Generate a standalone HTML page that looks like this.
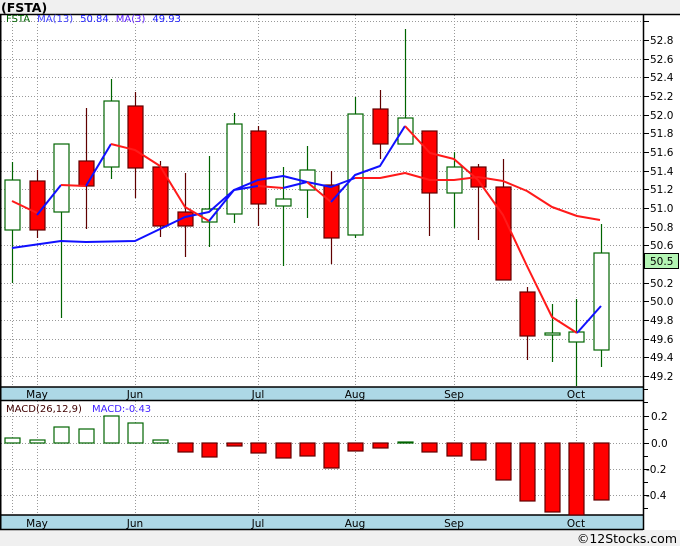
<!DOCTYPE html>
<html><head><meta charset="utf-8"><style>
html,body{margin:0;padding:0;background:#fff}
svg{display:block;font-family:"DejaVu Sans","Liberation Sans",sans-serif}
</style></head><body>
<svg width="680" height="546" viewBox="0 0 680 546" xmlns="http://www.w3.org/2000/svg">
<rect x="0" y="0" width="680" height="546" fill="#fff"/>
<rect x="0" y="0" width="680" height="14" fill="#f0f0f0"/>
<rect x="0" y="530" width="680" height="16" fill="#f0f0f0"/>
<text x="1" y="12" font-size="12.5" font-weight="bold" fill="#000">(FSTA)</text>
<text x="677" y="543" font-size="12.5" text-anchor="end" fill="#000">©12Stocks.com</text>

<g stroke="#999" stroke-width="1" stroke-dasharray="1,2" fill="none">
<path d="M1 21.5H643M1 40.5H643M1 59.5H643M1 77.5H643M1 96.5H643M1 115.5H643M1 133.5H643M1 152.5H643M1 171.5H643M1 189.5H643M1 208.5H643M1 227.5H643M1 245.5H643M1 264.5H643M1 283.5H643M1 301.5H643M1 320.5H643M1 339.5H643M1 357.5H643M1 376.5H643"/>
<path d="M1 416.5H643M1 443.5H643M1 469.5H643M1 495.5H643"/>
<path d="M12.5 15V387M37.5 15V387M135.5 15V387M258.5 15V387M355.5 15V387M454.5 15V387M576.5 15V387"/>
<path d="M12.5 401V515M37.5 401V515M135.5 401V515M258.5 401V515M355.5 401V515M454.5 401V515M576.5 401V515"/>
</g>

<rect x="1" y="387" width="642" height="13" fill="#add8e6"/>
<rect x="1" y="515" width="642" height="14" fill="#add8e6"/>
<g font-size="10.5" fill="#000" text-anchor="middle">
<text x="37" y="398">May</text><text x="135" y="398">Jun</text><text x="258" y="398">Jul</text><text x="355" y="398">Aug</text><text x="454" y="398">Sep</text><text x="576" y="398">Oct</text>
<text x="37" y="527">May</text><text x="135" y="527">Jun</text><text x="258" y="527">Jul</text><text x="355" y="527">Aug</text><text x="454" y="527">Sep</text><text x="576" y="527">Oct</text>
</g>
<g stroke="#000" stroke-width="1.5" fill="none">
<path d="M0.75 14V530"/>
<path d="M643.5 14V530"/>
<path d="M0 14.5H680"/>
<path d="M0 387H643M0 400.5H643M0 515H643M0 529.5H643"/>
</g>

<text x="6" y="22" font-size="10"><tspan fill="#006400">FSTA</tspan><tspan fill="#4040ff" dx="7">MA(13)</tspan><tspan fill="#2020ff" dx="7">50.84</tspan><tspan fill="#6020ff" dx="7">MA(3)</tspan><tspan fill="#2020ff" dx="7">49.93</tspan></text>
<text x="6" y="412" font-size="10"><tspan fill="#400000">MACD(26,12,9)</tspan><tspan fill="#4020ff" dx="10">MACD:-0.43</tspan></text>

<g stroke="#000" stroke-width="1">
<path d="M643 40.5h6M643 59.5h6M643 77.5h6M643 96.5h6M643 115.5h6M643 133.5h6M643 152.5h6M643 171.5h6M643 189.5h6M643 208.5h6M643 227.5h6M643 245.5h6M643 283.5h6M643 301.5h6M643 320.5h6M643 339.5h6M643 357.5h6M643 376.5h6M643 21.5h6"/>
<path d="M643 402.5h5M643 416.5h6M643 429.5h5M643 443.5h6M643 456.5h5M643 469.5h6M643 482.5h5M643 495.5h6M643 508.5h5M643 389.5h5"/>
</g>
<g font-size="10.5" fill="#000">
<text x="650" y="44">52.8</text><text x="650" y="63">52.6</text><text x="650" y="81">52.4</text><text x="650" y="100">52.2</text><text x="650" y="119">52.0</text><text x="650" y="137">51.8</text><text x="650" y="156">51.6</text><text x="650" y="175">51.4</text><text x="650" y="193">51.2</text><text x="650" y="212">51.0</text><text x="650" y="231">50.8</text><text x="650" y="249">50.6</text><text x="650" y="287">50.2</text><text x="650" y="305">50.0</text><text x="650" y="324">49.8</text><text x="650" y="343">49.6</text><text x="650" y="361">49.4</text><text x="650" y="380">49.2</text>
<text x="651" y="420">0.2</text><text x="651" y="447">0.0</text><text x="646" y="473">-0.2</text><text x="646" y="499">-0.4</text>
</g>
<rect x="644.5" y="253.5" width="34" height="15" fill="#b4f5b4" stroke="#000"/>
<text x="650" y="265" font-size="10.5" fill="#000">50.5</text>

<g stroke-width="1.2">
<g stroke="#006400" fill="#fff">
<path d="M12.5 162V283M61.5 144V318M111.5 79V179M209.5 156V247M234.5 113V223M283.5 167V266M307.5 146V218M355.5 97V238M405.5 29V144M454.5 152V228M552.5 304V362M576.5 299V386M601.5 224V367"/>
<rect x="5" y="180" width="15" height="50"/><rect x="54" y="144" width="15" height="68"/><rect x="104" y="101" width="15" height="66"/><rect x="202" y="209" width="15" height="13"/><rect x="227" y="124" width="15" height="90"/><rect x="276" y="199" width="15" height="7"/><rect x="300" y="170" width="15" height="20"/><rect x="348" y="114" width="15" height="121"/><rect x="398" y="118" width="15" height="26"/><rect x="447" y="167" width="15" height="26"/><rect x="545" y="333" width="15" height="2"/><rect x="569" y="332" width="15" height="10"/><rect x="594" y="253" width="15" height="97"/>
</g>
<g stroke="#600000" fill="#ff0000">
<path d="M37.5 170V238M86.5 108V229M135.5 92V198M160.5 161V237M185.5 173V257M258.5 126V226M331.5 171V264M380.5 90V159M429.5 131V236M478.5 164V240M503.5 159V280M527.5 287V360"/>
<rect x="30" y="181" width="15" height="49"/><rect x="79" y="161" width="15" height="25"/><rect x="128" y="106" width="15" height="62"/><rect x="153" y="167" width="15" height="59"/><rect x="178" y="212" width="15" height="14"/><rect x="251" y="131" width="15" height="73"/><rect x="324" y="185" width="15" height="53"/><rect x="373" y="109" width="15" height="35"/><rect x="422" y="131" width="15" height="62"/><rect x="471" y="167" width="15" height="20"/><rect x="496" y="187" width="15" height="93"/><rect x="520" y="292" width="15" height="44"/>
</g>
</g>

<g fill="none" stroke-width="2" stroke-linejoin="round">
<polyline stroke="#1010ff" points="12,248 61,241 86,242 135,241 185,217 209,212 234,190 258,180 283,176 307,182 331,187 355,178"/>
<polyline stroke="#ff1a1a" points="355,178 380,178 405,173 430,180 454,180 478,177 503,181 527,191 552,207 577,216 600,220"/>
<polyline stroke="#ff1a1a" points="12,201 37,213"/>
<polyline stroke="#1010ff" points="37,215 61,185"/>
<polyline stroke="#ff1a1a" points="61,185 86,186"/>
<polyline stroke="#1010ff" points="86,186 111,144"/>
<polyline stroke="#ff1a1a" points="111,144 135,150 160,166 185,207 209,221"/>
<polyline stroke="#1010ff" points="209,221 234,190 258,186"/>
<polyline stroke="#ff1a1a" points="258,186 283,188"/>
<polyline stroke="#1010ff" points="283,188 307,182"/>
<polyline stroke="#ff1a1a" points="307,182 331,202"/>
<polyline stroke="#1010ff" points="331,202 355,175 380,166 405,126"/>
<polyline stroke="#ff1a1a" points="405,126 430,153 454,159 478,180 503,215 527,266 552,317 577,333"/>
<polyline stroke="#1010ff" points="577,333 601,306"/>
</g>

<g stroke-width="1.2">
<g stroke="#006400" fill="#fff">
<rect x="5" y="438" width="15" height="5"/><rect x="30" y="440" width="15" height="3"/><rect x="54" y="427" width="15" height="16"/><rect x="79" y="429" width="15" height="14"/><rect x="104" y="416" width="15" height="27"/><rect x="128" y="423" width="15" height="20"/><rect x="153" y="440" width="15" height="3"/><rect x="398" y="442" width="15" height="1"/>
</g>
<g stroke="#600000" fill="#ff0000">
<rect x="178" y="443" width="15" height="9"/><rect x="202" y="443" width="15" height="14"/><rect x="227" y="443" width="15" height="3"/><rect x="251" y="443" width="15" height="10"/><rect x="276" y="443" width="15" height="15"/><rect x="300" y="443" width="15" height="13"/><rect x="324" y="443" width="15" height="25"/><rect x="348" y="443" width="15" height="8"/><rect x="373" y="443" width="15" height="5"/><rect x="422" y="443" width="15" height="9"/><rect x="447" y="443" width="15" height="13"/><rect x="471" y="443" width="15" height="17"/><rect x="496" y="443" width="15" height="37"/><rect x="520" y="443" width="15" height="58"/><rect x="545" y="443" width="15" height="69"/><rect x="569" y="443" width="15" height="72"/><rect x="594" y="443" width="15" height="57"/>
</g>
</g>
</svg>
</body></html>
